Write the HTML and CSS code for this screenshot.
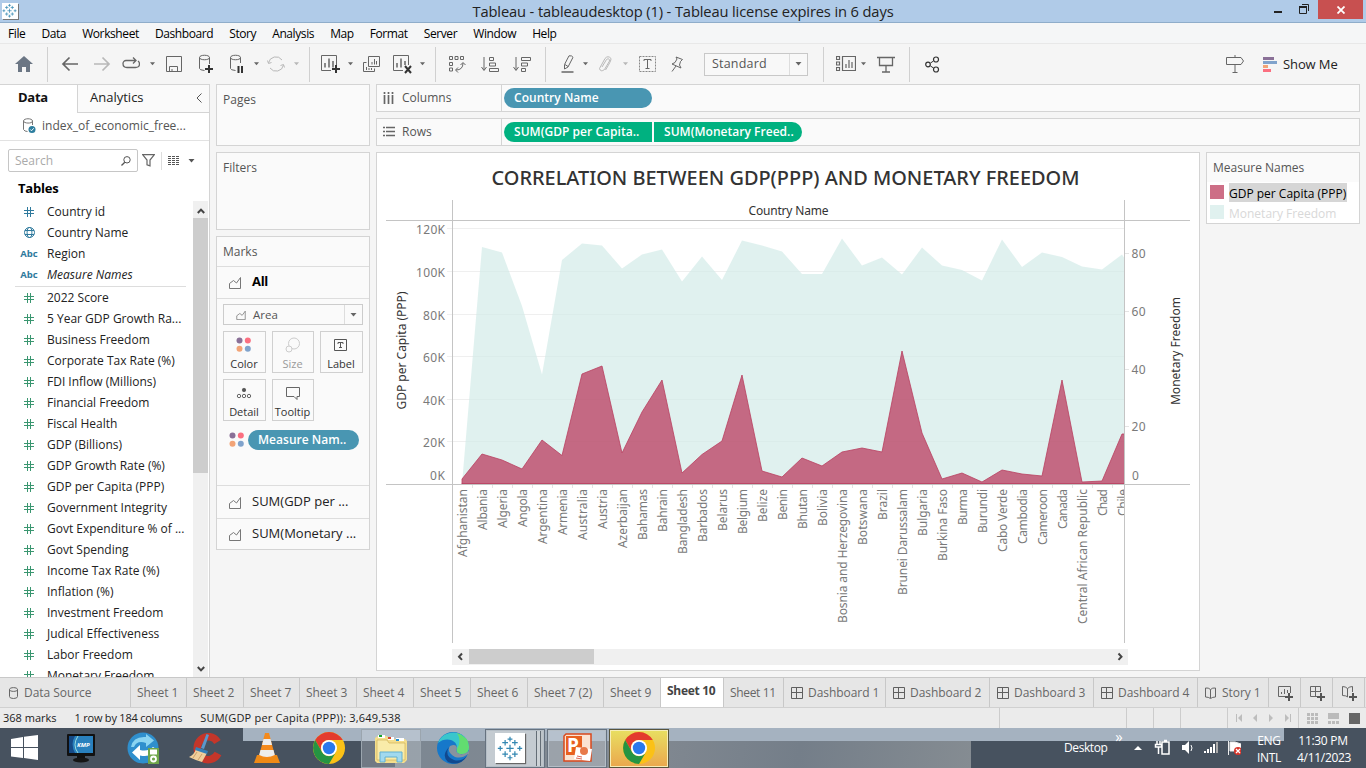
FILE: index.html
```html
<!DOCTYPE html>
<html lang="en">
<head>
<meta charset="utf-8">
<title>Tableau - tableaudesktop (1)</title>
<link rel="stylesheet" href="styles.css">
</head>
<body>
<svg class="defs" width="0" height="0">
  <symbol id="caret" viewBox="0 0 6 4"><path d="M0 0h6L3 3.6z" fill="currentColor"/></symbol>
  <symbol id="hash" viewBox="0 0 10 10"><path d="M3.5 0v10M6.5 0v10M0 3.5h10M0 6.5h10" stroke="currentColor" fill="none"/></symbol>
  <symbol id="area" viewBox="0 0 14 13"><path d="M1.500 12.500v-5l4-3 3 2.500 4-5.500v11z" fill="none" stroke="#777"/></symbol>
  <symbol id="dots" viewBox="0 0 16 16"><circle cx="3.500" cy="3.500" r="3" fill="#8a7097"/><circle cx="11.800" cy="3.500" r="3" fill="#fb6f80"/><circle cx="3.500" cy="11.700" r="3" fill="#f2a477"/><circle cx="11.800" cy="11.700" r="3" fill="#80a3cc"/></symbol>
  <symbol id="grid" viewBox="0 0 12 12"><path d="M.5.5h11v11H.5zM5.500 0v12M0 5.500h12" fill="none" stroke="#5f5f5f"/></symbol>
  <symbol id="book" viewBox="0 0 12 12"><path d="M5.500 2.500v8.500M5.500 2.500Q3.500.5.500 1v9q3 0 5 1.500 2-1.500 5-1.500V1q-3-.500-5 1.500" fill="none" stroke="#666"/></symbol>
  <symbol id="logo" viewBox="0 0 32 32"><g stroke="#3287b2" stroke-width="1.500" fill="none"><path d="M16 12v9M11.500 16.500h9M16 2v6M13 5h6M16 25v6M13 28h6M4 13.500v6M1 16.500h6M28 13.500v6M25 16.500h6M10 6v7M6.500 9.500h7M22 6v7M18.500 9.500h7M10 20v7M6.500 23.500h7M22 20v7M18.500 23.500h7"/></g></symbol>
  <symbol id="chrome" viewBox="0 0 32 32"><circle cx="16" cy="16" r="16" fill="#fbc116"/><path d="M2.200 8a16 16 0 0 1 27.600 0H16a8 8 0 0 0-7 12z" fill="#e33b2e"/><path d="M2.200 8a16 16 0 0 0 13.800 24l7-12a8 8 0 0 1-14 0z" fill="#259442"/><circle cx="16" cy="16" r="8" fill="#fff"/><circle cx="16" cy="16" r="6.200" fill="#2b79ec"/></symbol>
</svg>

<header class="titlebar">
  <span class="app-icon"><svg width="15" height="15"><use href="#logo"/></svg></span>
  <span class="title">Tableau - tableaudesktop (1) - Tableau license expires in 6 days</span>
  <span class="win-controls">
    <svg width="48" height="19" viewBox="1270 0 48 19"><path d="M1274 12h8" stroke="#222" stroke-width="2"/><path d="M1299.500 6.500h7v7h-7zM1302 4.500h6.500V11" fill="none" stroke="#222"/><path d="M1299 7h8" stroke="#222" stroke-width="2"/></svg>
    <span class="close"><svg width="8" height="8" viewBox="0 0 8 8"><path d="M.5.5l7 7M7.500.5l-7 7" stroke="#fff" stroke-width="1.800"/></svg></span>
  </span>
</header>

<nav class="menubar"><span>File</span><span>Data</span><span>Worksheet</span><span>Dashboard</span><span>Story</span><span>Analysis</span><span>Map</span><span>Format</span><span>Server</span><span>Window</span><span>Help</span></nav>

<div class="toolbar">
  <svg width="18" height="18" viewBox="0 0 18 18"><path d="M9 1l9 8h-3v8h-4v-5H7v5H3V9H0z" fill="#6b7684" stroke="none"/></svg>
  <i class="sep"></i>
  <svg width="18" height="16" viewBox="0 0 18 16"><path d="M17 8H2M8.500 1.500L2 8l6.500 6.500" stroke-width="1.700"/></svg>
  <svg class="off" width="18" height="16" viewBox="0 0 18 16"><path d="M1 8h15M9.500 1.500L16 8l-6.500 6.500" stroke-width="1.700"/></svg>
  <svg width="18" height="14" viewBox="0 0 18 14"><path d="M14 3.500H4a3 3 0 0 0-3 3q0 4 4 4h8.500q4 0 4-3.500 0-2-1.500-3M11 .5l3 3-3 3" stroke-width="1.300"/></svg>
  <svg class="car" width="5" height="4"><use href="#caret"/></svg>
  <svg width="16" height="16" viewBox="0 0 16 16"><path d="M.5.5h15v15H.5zM3.500 15v-4.500h8V15M6 15v-2"/></svg>
  <svg width="16" height="20" viewBox="0 0 16 20"><path d="M1.500 3.500v11q0 1.500 5 2M11.500 3.500V10M1.500 3.500c0-3 10-3 10 0s-10 3-10 0"/><path d="M11 11v8M7 15h8" stroke="#333" stroke-width="2"/></svg>
  <svg width="16" height="20" viewBox="0 0 16 20"><path d="M1.500 3.500v11q0 1.500 5 2M11.500 3.500V9M1.500 3.500c0-3 10-3 10 0s-10 3-10 0"/><path d="M9.500 12v7M13 12v7" stroke="#333" stroke-width="2"/></svg>
  <svg class="car" width="5" height="4"><use href="#caret"/></svg>
  <svg class="off" width="18" height="18" viewBox="0 0 18 18"><path d="M1.500 8a7.500 7.500 0 0 1 13.500-3M16.500 10A7.500 7.500 0 0 1 3 13M.5 5.500l1 3 3-1M17.500 12.500l-1-3-3 1"/></svg>
  <svg class="car off" width="5" height="4"><use href="#caret"/></svg>
  <i class="sep"></i>
  <svg width="20" height="19" viewBox="0 0 20 19"><path d="M10 15.500H.5V.5h15V10"/><path d="M4 12.500V8M8 12.500v-9M12 12.500V6" stroke-width="1.500"/><path d="M15 10v8M11 14h8" stroke="#333" stroke-width="2"/></svg>
  <svg class="car" width="5" height="4"><use href="#caret"/></svg>
  <svg width="17" height="17" viewBox="0 0 17 17"><path d="M5.500.5h11v10h-11zM3.500 6.500h-3v9h11v-3M9 8.500V6M11.500 8.500V3M13.500 8.500V5M3.500 14v-3M6 14v-2M8.500 14v-2"/></svg>
  <svg width="19" height="19" viewBox="0 0 19 19"><path d="M10 15.500H.5V.5h15V10"/><path d="M4 12.500V8M8 12.500v-9M12 10V6" stroke-width="1.500"/><path d="M12 11l6 7M18 11l-6 7" stroke="#333" stroke-width="2"/></svg>
  <svg class="car" width="5" height="4"><use href="#caret"/></svg>
  <i class="sep"></i>
  <svg width="17" height="17" viewBox="0 0 17 17"><path d="M.5.5h3v3h-3zM6 .5h3v3H6zM11.500.5h3v3h-3zM.5 6.500h3v3h-3zM.5 12h3v3h-3zM7 14q7 0 7-7M9 11.500L6.500 14 9 16.500M11.500 9L14 6.500 16.500 9"/></svg>
  <svg width="19" height="17" viewBox="0 0 19 17"><path d="M3 1v13M.5 11L3 14.500 5.500 11M8.500 1.500h4v3h-4zM8.500 7h6v3h-6zM8.500 12.500h9v3h-9z"/></svg>
  <svg width="19" height="17" viewBox="0 0 19 17"><path d="M3 1v13M.5 11L3 14.500 5.500 11M8.500 1.500h9v3h-9zM8.500 7h6v3h-6zM8.500 12.500h4v3h-4z"/></svg>
  <i class="sep"></i>
  <svg width="14" height="18" viewBox="0 0 14 18"><path d="M8 .8q3-.5 4 1.500L7 12l-3.500 2v-4.500zM4 9.500l3 2"/><path d="M.5 17h12" stroke-width="1.500"/></svg>
  <svg class="car" width="5" height="4"><use href="#caret"/></svg>
  <svg class="off" width="14" height="17" viewBox="0 0 14 17"><path d="M4 11L8.500 3.500q3-2 3 1.500L6.500 13.500q-4 3-5-1L7 2.500q3-3.500 6 0 .5 2-5.500 11.500"/></svg>
  <svg class="car off" width="5" height="4"><use href="#caret"/></svg>
  <svg width="17" height="16" viewBox="0 0 17 16"><path d="M.5.5h16v15H.5z" stroke-dasharray="2 1" stroke="#888"/><path d="M5 5V3.500h7V5M8.500 4v8.500M6.500 12.500h4"/></svg>
  <svg width="14" height="16" viewBox="0 0 14 16"><path d="M6 1l6.500 2.500L10.500 5.500 9.500 9l1.500 3L2 8l3-1.500 2-3.500zM6 10l-4 5.500"/></svg>
  <div class="combo"><span>Standard</span><b><svg width="7" height="4"><use href="#caret"/></svg></b></div>
  <i class="sep"></i>
  <svg width="20" height="16" viewBox="0 0 20 16"><path d="M.5.5h3v3h-3zM.5 6h3v3h-3zM.5 11.500h3v3h-3zM6.500.5h13v14h-13zM10 12V8M13 12V4M16 12V6" stroke-width="1.200"/></svg>
  <svg class="car" width="5" height="4"><use href="#caret"/></svg>
  <svg width="18" height="17" viewBox="0 0 18 17"><path d="M0 1.500h18M2.500 1.500v8h13v-8M9 9.500V16M5 16h8" stroke-width="1.300"/></svg>
  <i class="sep"></i>
  <svg width="15" height="17" viewBox="0 0 15 17"><path d="M5.500 7l3-2M5.500 10l3 2" stroke="#333"/><g stroke="#333" stroke-width="1.200"><circle cx="3" cy="8.500" r="2.300"/><circle cx="11" cy="3.500" r="2.500"/><circle cx="11" cy="13.500" r="2.500"/></g></svg>
  <i></i>
  <svg width="18" height="18" viewBox="0 0 18 18"><path d="M.5 2.500H15l2.500 3.500L15 9.500H.5zM9 0v2M9 9.500v8M6.500 17.500h5"/></svg>
  <div class="showme"><svg width="14" height="15" viewBox="0 0 14 15"><g stroke="none"><path d="M0 0h11v3H0z" fill="#8a7097"/><path d="M0 4h14v3H0z" fill="#80a3cc"/><path d="M0 8h5v3H0z" fill="#f2a477"/><path d="M0 12h8v3H0z" fill="#fb6f80"/></g></svg>Show Me</div>
</div>

<main class="workspace">
  <aside class="data-pane">
    <div class="pane-tabs"><span class="active">Data</span><span class="analytics">Analytics<svg width="6" height="10" viewBox="0 0 6 10"><path d="M5.500.5L1 5l4.500 4.500" fill="none" stroke="#555"/></svg></span></div>
    <div class="source"><svg width="15" height="16" viewBox="0 0 15 16"><path d="M1.500 3v8.500q1 2 4 2M10.500 3v4M1.500 3c0-3 9-3 9 0s-9 2.500-9 0" fill="none" stroke="#777"/><circle cx="10" cy="11.500" r="3.500" fill="#2d7e9f"/><path d="M8.300 11.500l1.200 1.300 2.200-2.500" fill="none" stroke="#fff"/></svg><span>index_of_economic_free...</span></div>
    <div class="search-row">
      <div class="search"><span>Search</span><svg width="10" height="10" viewBox="0 0 10 10"><circle cx="6" cy="3.800" r="3.200" fill="none" stroke="#555"/><path d="M3.800 6.200L.5 9.500" stroke="#555" stroke-width="1.300"/></svg></div>
      <svg class="funnel" width="13" height="13" viewBox="0 0 13 13"><path d="M.6.6h11.800L8 6v5.800l-3-1V6z" fill="none" stroke="#666" stroke-width="1.200"/></svg>
      <svg class="view" width="12" height="10" viewBox="0 0 12 10"><path d="M0 .5h12M0 2.500h12M0 4.500h12M0 6.500h12M0 8.500h12" stroke="#555" stroke-dasharray="3 1"/></svg>
      <svg class="car" width="7" height="4"><use href="#caret"/></svg>
    </div>
    <h2>Tables</h2>
    <div class="fields">
      <div class="list" id="fields"></div>
      <div class="vscroll"><svg width="8" height="6" viewBox="0 0 8 6"><path d="M.8 5L4 1.600 7.200 5" fill="none" stroke="#444" stroke-width="2"/></svg><b></b><svg width="8" height="6" viewBox="0 0 8 6"><path d="M.8 1L4 4.400 7.200 1" fill="none" stroke="#444" stroke-width="2"/></svg></div>
    </div>
  </aside>

  <section class="cards">
    <div class="card pages">Pages</div>
    <div class="card filters">Filters</div>
    <div class="card marks">
      <div class="marks-title">Marks</div>
      <div class="mark-row all"><svg width="14" height="13"><use href="#area"/></svg><span>All</span></div>
      <div class="marks-body">
        <div class="mark-type"><svg width="12" height="10"><use href="#area"/></svg><span>Area</span><b><svg width="7" height="4"><use href="#caret"/></svg></b></div>
        <div class="mark-buttons">
          <div><svg width="16" height="16"><use href="#dots"/></svg>Color</div>
          <div class="dim"><svg width="16" height="16" viewBox="0 0 16 16" fill="none" stroke="#ccc"><circle cx="9" cy="6.500" r="5.500"/><circle cx="4" cy="12" r="3" fill="#fafafa"/></svg>Size</div>
          <div><svg width="16" height="16" viewBox="0 0 16 16" fill="none" stroke="#555"><path d="M1.500 2.500h12v11h-12zM5 7V5.500h5V7M7.500 5.500v5M6 10.500h3"/></svg>Label</div>
          <div><svg width="16" height="16" viewBox="0 0 16 16" fill="none" stroke="#666"><circle cx="8" cy="5" r="1.700" fill="#555"/><circle cx="3" cy="11" r="1.700"/><circle cx="8" cy="11" r="1.700"/><circle cx="13" cy="11" r="1.700"/></svg>Detail</div>
          <div><svg width="16" height="16" viewBox="0 0 16 16" fill="none" stroke="#666"><path d="M1.500 2.500h13v9H12v3l-3-3H1.500z"/></svg>Tooltip</div>
        </div>
        <div class="encoding"><svg width="16" height="16"><use href="#dots"/></svg><span class="pill blue">Measure Nam..</span></div>
      </div>
      <div class="mark-row"><svg width="14" height="13"><use href="#area"/></svg><span>SUM(GDP per ...</span></div>
      <div class="mark-row"><svg width="14" height="13"><use href="#area"/></svg><span>SUM(Monetary ...</span></div>
    </div>
  </section>

  <section class="sheet">
    <div class="shelf"><div class="shelf-name"><svg width="12" height="12" viewBox="0 0 12 12"><path d="M1.500 3v9M5.500 3v9M9.500 3v9M1.500 0v2M5.500 0v2M9.500 0v2" stroke="#666" stroke-width="1.700"/></svg>Columns</div><span class="pill blue">Country Name</span></div>
    <div class="shelf"><div class="shelf-name"><svg width="12" height="12" viewBox="0 0 12 12"><path d="M3 1.500h9M3 5.500h9M3 9.500h9M0 1.500h2M0 5.500h2M0 9.500h2" stroke="#666" stroke-width="1.700"/></svg>Rows</div><span class="pill green first">SUM(GDP per Capita..</span><span class="pill green last">SUM(Monetary Freed..</span></div>
    <div class="canvas-row">
      <div class="view-card"><svg id="chart" width="822" height="517" viewBox="377 153 822 517"></svg></div>
      <div class="legend"><h3>Measure Names</h3>
        <div class="key"><i class="rose"></i><span class="selected">GDP per Capita (PPP)</span></div>
        <div class="key faded"><i class="mint"></i><span>Monetary Freedom</span></div>
      </div>
    </div>
  </section>
</main>

<nav class="sheet-tabs">
  <span class="ds"><svg width="9" height="12" viewBox="0 0 9 12"><path d="M.5 2.500v7q0 2 4 2t4-2v-7c0-2.500-8-2.500-8 0s8 2.500 8 0" fill="none" stroke="#666"/></svg>Data Source</span>
  <span>Sheet 1</span><span>Sheet 2</span><span>Sheet 7</span><span>Sheet 3</span><span>Sheet 4</span><span>Sheet 5</span><span>Sheet 6</span><span>Sheet 7 (2)</span><span>Sheet 9</span><span class="active">Sheet 10</span><span class="tight">Sheet 11</span>
  <span class="dash"><svg width="12" height="12"><use href="#grid"/></svg>Dashboard 1</span><span class="dash"><svg width="12" height="12"><use href="#grid"/></svg>Dashboard 2</span><span class="dash"><svg width="12" height="12"><use href="#grid"/></svg>Dashboard 3</span><span class="dash"><svg width="12" height="12"><use href="#grid"/></svg>Dashboard 4</span>
  <span class="dash"><svg width="12" height="12"><use href="#book"/></svg>Story 1</span>
  <span class="new"><svg width="15" height="15" viewBox="0 0 15 15"><path d="M8 10.500H.5V.5h12V7M3.500 8V6M6.500 8V3M9.500 7V4" fill="none" stroke="#666"/><path d="M11 7v8M7 11h8" stroke="#555" stroke-width="2"/></svg></span>
  <span class="new"><svg width="15" height="15" viewBox="0 0 15 15"><path d="M7 10.500H.5V.5h10V6M5.500 0v10M0 5.500h11" fill="none" stroke="#666"/><path d="M11 7v8M7 11h8" stroke="#555" stroke-width="2"/></svg></span>
  <span class="new"><svg width="15" height="15" viewBox="0 0 15 15"><path d="M6 11Q4 9.500.5 9.500v-9q3 0 5 2 2-2 5-2V6M5.500 2.500V11" fill="none" stroke="#666"/><path d="M11 7v8M7 11h8" stroke="#555" stroke-width="2"/></svg></span>
  <span></span>
</nav>

<footer class="status">
  <div class="stats"><span>368 marks</span><span>1 row by 184 columns</span><span>SUM(GDP per Capita (PPP)): 3,649,538</span></div>
  <i></i><i></i><i></i><i></i>
  <div><svg width="56" height="8" viewBox="0 0 56 8" fill="#bdbdbd"><path d="M0 0h1v8H0zM6 0v8L2 4zM21 0v8l-4-4zM33 0v8l4-4zM49 0v8l4-4zM54 0h1v8h-1z"/></svg></div>
  <div><svg width="54" height="11" viewBox="0 0 54 11"><path d="M0 1.500h11M0 5.500h11M0 9.500h11" stroke="#bbb" stroke-width="3" stroke-dasharray="3 1"/><path d="M21 0h11v6H21zM21 8h3v3h-3zM25 8h3v3h-3zM29 8h3v3h-3z" fill="#bbb"/><path d="M42 0h11v11H42z" fill="#666"/></svg></div>
</footer>

<footer class="taskbar">
  <div class="start"><svg width="28" height="26" viewBox="0 0 28 26"><path d="M0 4l12-2v10H0zM13 1.800L27 0v12H13zM0 13h12v10L0 21.500zM13 13h14v12l-14-2z" fill="#fff"/></svg></div>
  <div><svg width="30" height="30" viewBox="0 0 30 30"><rect x="1" y="1" width="28" height="22" rx="1" fill="#111"/><rect x="3" y="3" width="24" height="17" fill="#2980bd"/><path d="M3 3h6q-5 8 0 17H3z" fill="#164a86"/><path d="M12 3q-6 9 0 17" stroke="#9dd" fill="none"/><text x="11" y="14" class="kmp">KMP</text><path d="M11 23h8v3h-8z" fill="#111"/><ellipse cx="15" cy="27" rx="8" ry="2.500" fill="#151515"/></svg></div>
  <div><svg width="34" height="32" viewBox="0 0 34 32"><circle cx="17" cy="16" r="15.500" fill="#2f8fcd"/><path d="M5 15Q7 4 20 5V2l8 6.500-8 6.500v-4Q11 8 8 15z" fill="#8bd4f1"/><path d="M30 17Q26 26 14 23.500V28L6 20.500l8-7.500v5q8 2 13-3z" fill="#fff"/><rect x="22" y="16" width="11" height="16" fill="#6fa64b"/><path d="M24 17.500h7v5h-7z" fill="#fff"/><circle cx="27.500" cy="27" r="2.500" fill="none" stroke="#fff" stroke-width="1.800"/></svg></div>
  <div><svg width="34" height="32" viewBox="0 0 34 32"><path d="M29.500 10A11 11.500 0 1 0 30 21.500" fill="none" stroke="#c4362a" stroke-width="7.500"/><path d="M18.500 2l2.500 1-5 14-3-1z" fill="#5b97cb"/><path d="M8 17l11 4-5 9Q7 28 1 25q5-2 7-8z" fill="#efcf9c"/><path d="M8 15l12 4-1 3-12-4z" fill="#3580b8"/><path d="M9 20l-4 6M14 22l-4 6" stroke="#cfa068" fill="none"/></svg></div>
  <div><svg width="28" height="32" viewBox="0 0 28 32"><path d="M4 23h20l3 8H1z" fill="#ef8a16"/><path d="M12 1h4l6 23q-8 5-16 0z" fill="#f58a1c"/><path d="M10.500 7h7l1.500 6H9zM7.500 18h13l1.300 5q-8 4-15.600 0z" fill="#eee"/></svg></div>
  <div><svg width="32" height="32"><use href="#chrome"/></svg></div>
  <div class="task wide"><svg width="34" height="32" viewBox="0 0 34 32"><path d="M1 6l3-2h9l2 3h16l2 2v19l-3 3H3L1 29z" fill="#f4de8c"/><path d="M3 8h10l2 3h16v17H3z" fill="#f9eba9" stroke="#caa94e" stroke-width=".6"/><path d="M4 3h7v3H4zM14 5h6v3h-6zM22 6h8v3h-8z" fill="#fff"/><path d="M5 3h3v2H5z" fill="#17a52d"/><path d="M14 5h3v2h-3z" fill="#d9492c"/><path d="M22 7h3v2h-3z" fill="#238ed6"/><path d="M6 30V20h22v10h-5v-5H11v5z" fill="#a1d9ef" stroke="#62b0d1"/></svg></div>
  <div><svg width="32" height="32" viewBox="0 0 32 32"><circle cx="16" cy="16" r="16" fill="#1678ca"/><path d="M1 11C7-5 31-2 32 15q0 8-9 7-5-1-3-6c0-9-12-11-19-5z" fill="#39c6cc"/><path d="M20 1q12 4 12 14 0 8-9 7-4-1-3-5 5-8 0-16z" fill="#62dd70"/><path d="M12 15Q7 24 17 28q7 2 13-4-7 11-19 6Q4 24 12 15z" fill="#11498f"/><path d="M13 14q-4 6 5 11 7 2 13-3 2 0 1-3-4 4-9 3-5-1-3-6-1-5-7-2z" fill="#87939f"/></svg></div>
  <div class="task stack"><span class="tableau"><svg width="26" height="28"><use href="#logo"/></svg></span></div>
  <div class="task"><svg width="31" height="32" viewBox="0 0 31 32"><path d="M4 2h25v27H2V4z" fill="#fbe3d2" stroke="#d9481c" stroke-width="1.500"/><path d="M4 4h16v19H4z" fill="#e8601f"/><text x="5" y="20" class="ppt">P</text><path d="M14 15l16 2-2 12-16-2z" fill="#fff"/><circle cx="22" cy="19" r="4" fill="#e87a4a"/><path d="M15 24l5 1M14 26l6 1" stroke="#d65"/></svg></div>
  <div class="task hot"><svg width="32" height="32"><use href="#chrome"/></svg></div>
  <div class="tray">
    <span class="desk">Desktop</span><span class="more">»</span>
    <svg width="110" height="18" viewBox="1132 740 110 18"><path d="M1135 751l4-4 4 4z" fill="#fff"/><g fill="none" stroke="#fff" stroke-width="1.500"><path d="M1163 743h7v12h-7zM1165 741.500h3M1158 742v4M1161 742v4M1156.500 745.500h6v2.500h-6zM1159.500 748v7"/></g><path d="M1183 746h3l4-4v13l-4-4h-3z" fill="#fff"/><path d="M1192 746q2 3 0 6" stroke="#fff" fill="none"/><path d="M1205 754v-2h2v2zM1208 754v-4h2v4zM1211 754v-6h2v6zM1214 754v-9h2v9z" fill="#fff"/><path d="M1217 754v-11h2v11z" fill="#aaa"/><path d="M1229.500 742v14M1231 743h5l6 2v7h-11z" fill="#fff" stroke="#eee"/><circle cx="1239" cy="752" r="4" fill="#d8352a"/><path d="M1237 750l4 4M1241 750l-4 4" stroke="#fff" stroke-width="1.300"/></svg>
    <span class="lang">ENG<br>INTL</span><span class="clock">11:30 PM<br>4/11/2023</span>
  </div>
</footer>
<script src="app.js"></script>
</body>
</html>
```
FILE: styles.css
```css
* { box-sizing: border-box; }
body { margin: 0; width: 1366px; height: 768px; overflow: hidden; display: flex; flex-direction: column; background: #f5f5f5; color: #222; font: 12px/16px "Open Sans", "Noto Sans", sans-serif; white-space: nowrap; }
.defs { position: absolute; }
svg { display: block; flex: none; }

.titlebar { height: 23px; flex: none; display: grid; grid-template-columns: 1fr auto 1fr; background: #b0cbe8; border-bottom: 1px solid #8fadca; }
.app-icon { width: 16px; height: 16px; margin: 3px 0 0 2px; background: #fff; box-shadow: 1px 1px 0 #777; }
.title { font-size: 14.700px; letter-spacing: -.13px; line-height: 23px; color: #222; }
.win-controls { justify-self: end; display: flex; padding-right: 3px; }
.close { width: 45px; height: 19px; background: #c85050; display: grid; place-items: center; }

.menubar { height: 21px; flex: none; display: flex; gap: 16px; padding-left: 8px; line-height: 21px; font-size: 12px; letter-spacing: -0.400px; color: #000; background: #f5f6f7; border-bottom: 1px solid #e8e8e8; }

.toolbar { height: 40px; flex: none; display: grid; align-items: center; justify-items: center; grid-template-columns: 47px 1px 44px 20px 38px 5px 38px 26px 35px 5px 34px 6px 21px 21px 19px 23px 38px 2px 25px 18px 48px 16px 31px 14px 21px 18px 23px 21px 38px 120px 15px 29px 7px 37px 11px 34px 272px 28px 1fr; color: #666; }
.toolbar svg { fill: none; stroke: #666; }
.toolbar .off { stroke: #b8b8b8; color: #b8b8b8; }
.toolbar .car { stroke: none; }
.sep { width: 1px; height: 35px; background: #d0d0d0; }
.combo { width: 104px; height: 23px; border: 1px solid #c8c8c8; background: #f8f8f8; display: flex; align-items: center; justify-content: space-between; padding-left: 7px; font-size: 12.500px; color: #555; letter-spacing: .2px; }
.combo b, .mark-type b { width: 18px; align-self: stretch; border-left: 1px solid #ddd; display: grid; place-items: center; color: #666; }
.combo svg, .mark-type b svg { stroke: none; }
.showme { justify-self: start; display: flex; align-items: center; gap: 6px; margin-left: 14px; font-size: 13px; letter-spacing: -.1px; color: #222; }

.workspace { height: 593px; flex: none; display: grid; grid-template-columns: 210px 154px 984px; column-gap: 6px; }
.data-pane { display: flex; flex-direction: column; min-height: 0; background: #fff; border-right: 1px solid #d4d4d4; border-top: 1px solid #d4d4d4; }
.pane-tabs { height: 26px; flex: none; display: grid; grid-template-columns: 77px 1fr; font-size: 13px; line-height: 25px; }
.pane-tabs .active { padding-left: 18px; font-weight: 700; letter-spacing: -.3px; color: #111; }
.analytics { display: flex; justify-content: space-between; align-items: center; padding: 0 7px 2px 12px; background: #fafafa; border: solid #d4d4d4; border-width: 0 0 1px 1px; }
.source { height: 30px; flex: none; display: flex; align-items: center; gap: 5px; padding-left: 22px; color: #555; border-bottom: 1px solid #e2e2e2; }
.search-row { height: 37px; flex: none; display: flex; align-items: center; padding: 2px 0 0 8px; color: #555; }
.search { width: 130px; height: 23px; border: 1px solid #c6c6c6; border-radius: 2px; display: flex; align-items: center; justify-content: space-between; padding: 0 6px; color: #aaa; }
.funnel { margin-left: 4px; }
.view { margin: 0 8px 0 6px; box-sizing: content-box; border-left: 1px solid #ddd; padding: 4px 0 4px 6px; }
.data-pane h2 { margin: 0; height: 23px; flex: none; padding-left: 18px; font-size: 13px; line-height: 21px; letter-spacing: -.2px; color: #000; }
.fields { flex: 1; min-height: 0; display: flex; justify-content: space-between; }
.list { overflow: hidden; flex: 1; }
.field { height: 21px; display: grid; grid-template-columns: 32px 1fr; align-items: center; padding-left: 15px; color: #3a9670; line-height: 21px; }
.field span { color: #222; }
.field .ico { justify-self: center; margin-right: 4px; }
.field.dim { color: #2f7a9d; }
.field .abc { font-size: 9.500px; font-weight: 700; color: #2f7a9d; margin-right: 4px; }
.field.italic span:last-child { font-style: italic; }
.field.rule { height: 23px; margin-left: 15px; padding: 0; margin-right: 7px; border-top: 1px solid #ddd; margin-top: 1px; height: 22px; }
.vscroll { width: 15px; margin-right: 1px; background: #f0f0f0; display: grid; grid-template-rows: 17px 255px 1fr; justify-items: center; }
.vscroll svg:first-child { margin-top: 7px; }
.vscroll svg:last-child { align-self: end; margin-bottom: 5px; }
.vscroll b { width: 15px; background: #cdcdcd; }

.cards { display: flex; flex-direction: column; gap: 6px; color: #555; }
.card { border: 1px solid #d4d4d4; background: #fafafa; padding: 7px 6px; }
.pages { height: 62px; }
.filters { height: 78px; }
.marks { height: 314px; padding: 0; }
.marks-title { height: 30px; padding: 7px 6px; border-bottom: 1px solid #ddd; }
.mark-row { height: 32px; display: flex; align-items: center; gap: 10px; padding-left: 11px; font-size: 13px; color: #222; }
.mark-row span { padding-bottom: 3px; }
.mark-row + .mark-row { border-top: 1px solid #ddd; }
.mark-row.all { font-weight: 700; border-bottom: 1px solid #ddd; color: #000; letter-spacing: -.3px; }
.marks-body { height: 187px; border-bottom: 1px solid #ddd; padding: 5px 6px; }
.mark-type { height: 21px; width: 140px; border: 1px solid #ccc; display: flex; align-items: center; padding-left: 11px; gap: 6px; font-size: 11.500px; }
.mark-type b { margin-left: auto; }
.mark-buttons { display: grid; grid-template-columns: 43px 42px 43px; gap: 6px; margin-top: 6px; }
.mark-buttons div { height: 42px; border: 1px solid #d0d0d0; display: flex; flex-direction: column; align-items: center; padding: 5px 1px 0 0; gap: 3px; font-size: 11px; color: #333; }
.mark-buttons .dim { color: #999; }
.encoding { display: flex; align-items: center; gap: 3px; margin: 9px 0 0 6px; }
.pill { height: 20px; border-radius: 10px; padding-left: 10px; font-size: 12px; line-height: 19px; color: #fff; font-weight: 600; letter-spacing: .03px; }
.blue { background: #4996b2; }
.green { background: #00b180; }
.encoding .pill { width: 111px; }

.sheet { display: flex; flex-direction: column; gap: 6px; }
.shelf { height: 28px; border: 1px solid #d4d4d4; background: #fafafa; display: flex; align-items: center; gap: 2px; }
.shelf-name { width: 125px; height: 26px; display: flex; align-items: center; gap: 7px; padding-left: 6px; border-right: 1px solid #d4d4d4; color: #555; }
.shelf .pill { width: 148px; }
.shelf .first { border-radius: 10px 0 0 10px; }
.shelf .last { border-radius: 0 10px 10px 0; }
.canvas-row { display: grid; grid-template-columns: 824px 154px; gap: 6px; align-items: start; }
.view-card { height: 519px; background: #fff; border: 1px solid #d4d4d4; }
.legend { height: 72px; background: #fff; border: 1px solid #d4d4d4; }
.legend h3 { margin: 0; height: 29px; padding: 7px 6px; background: #fafafa; font-size: 12px; font-weight: 400; color: #555; }
.key { height: 20px; display: flex; align-items: center; gap: 5px; padding-left: 3px; color: #000; }
.key i { width: 14px; height: 14px; }
.key span { line-height: 17px; padding: 2px 1px 0 0; }
.key .selected { background: #d6d6d6; }
.key.faded { color: #d8d8d8; }
.rose { background: #cd6e86; }
.mint { background: #e0f1ef; }

.chart-label { font-family: "Noto Sans", "Open Sans", sans-serif; font-size: 12px; fill: #7a7a7a; }
.chart-dark { fill: #333; }
.chart-title { font: 500 19.800px "Noto Sans", "Open Sans", sans-serif; fill: #333; }

.sheet-tabs { height: 31px; flex: none; display: grid; grid-template-columns: 131px 56px 57px 56px 57px 57px 57px 57px 76px 57px 63px 60px 102px 104px 104px 104px 71px 32px 32px 32px 1fr; background: #e6e6e6; border-top: 1px solid #c8c8c8; border-bottom: 1px solid #d0d0d0; color: #666; }
.sheet-tabs span { display: flex; align-items: center; border-right: 1px solid #c8c8c8; padding-left: 6px; letter-spacing: -.05px; }
.sheet-tabs .ds { padding-left: 9px; gap: 6px; }
.sheet-tabs .dash { padding-left: 7px; gap: 5px; }
.sheet-tabs .new { padding: 2px 0 0 9px; }
.sheet-tabs .active { background: #fff; color: #444; font-weight: 700; padding-bottom: 3px; letter-spacing: -.3px; }
.sheet-tabs .tight { letter-spacing: -.35px; }

.status { height: 20px; flex: none; display: grid; grid-template-columns: 1000px 127px 27px 27px 47px 71px 67px; align-items: stretch; background: #ebebeb; font-size: 11px; color: #222; }
.status > * { border-right: 1px solid #ccc; display: flex; align-items: center; padding-left: 8px; }
.status > :last-child { border: 0; }
.status .stats { gap: 18px; padding-left: 3px; }
.stats span:nth-child(2) { letter-spacing: -.22px; }
.stats span:last-child { letter-spacing: .2px; }

.taskbar { height: 40px; flex: none; display: grid; grid-template-columns: 50px repeat(10, 62px) 1fr; align-items: center; justify-items: center; color: #fff; background: linear-gradient(#a5b2c0, #a5b2c0) 243px 0 / 1041px 13px no-repeat, linear-gradient(100deg, #7c8792, #838a92 40%, #747e89 70%, #858c92) 395px 13px / 576px 27px no-repeat, #47525f; }
.task { width: 60px; height: 39px; display: grid; place-items: center; border: 1px solid #66727f; box-shadow: inset 0 0 0 1px #b5bec6; background: rgba(235, 240, 245, .25); }
.task.wide { border-color: #9ba5ae; box-shadow: none; }
.task.stack { background: linear-gradient(90deg, #c4cbd1 50px, #636d76 50px, #636d76 51px, #ccd2d6 51px, #ccd2d6 54px, #636d76 54px, #636d76 55px, #bdc4c9 55px); justify-items: start; padding-left: 9px; }
.task.hot { background: linear-gradient(#e8df61, #eba74d); border-color: #58543b; box-shadow: inset 0 0 0 1px #f7edb7; }
.tableau { width: 30px; height: 30px; background: #fff; display: grid; place-items: center; box-shadow: 1px 1px 1px #666; }
.kmp { font: italic 700 6px "Open Sans", sans-serif; fill: #fff; }
.ppt { font: 700 19px "Open Sans", sans-serif; fill: #fff; }
.tray { width: 100%; height: 40px; display: grid; grid-template-columns: 47px 16px 4px 110px 56px 52px; align-items: center; padding-left: 394px; line-height: 16px; }
.tray .desk { letter-spacing: -.4px; }
.tray .more { align-self: start; line-height: 17px; text-align: center; font-size: 15px; }
.tray svg { grid-column: 4; }
.lang, .clock { text-align: center; line-height: 17px; padding-top: 2px; letter-spacing: -.3px; }
```
FILE: app.js
```js
const dims = [["hash", "Country id"], ["globe", "Country Name"], ["abc", "Region"], ["abc", "Measure Names"]];
const measures = ["2022 Score", "5 Year GDP Growth Ra...", "Business Freedom", "Corporate Tax Rate (%)", "FDI Inflow (Millions)", "Financial Freedom", "Fiscal Health", "GDP (Billions)", "GDP Growth Rate (%)", "GDP per Capita (PPP)", "Government Integrity", "Govt Expenditure % of ...", "Govt Spending", "Income Tax Rate (%)", "Inflation (%)", "Investment Freedom", "Judical Effectiveness", "Labor Freedom", "Monetary Freedom"];
const icons = {
  hash: '<svg class="ico" width="10" height="10"><use href="#hash"/></svg>',
  globe: '<svg class="ico" width="11" height="11" viewBox="0 0 11 11" fill="none" stroke="currentColor"><circle cx="5.5" cy="5.5" r="5"/><ellipse cx="5.5" cy="5.5" rx="2.4" ry="5"/><path d="M1 3.500h9M1 7.500h9"/></svg>',
  abc: '<span class="abc ico">Abc</span>'
};
let rows = dims.map(([icon, name]) => `<div class="field dim${name === "Measure Names" ? " italic" : ""}">${icons[icon]}<span>${name}</span></div>`).join("");
rows += measures.map((name, i) => `<div class="field${i ? "" : " rule"}">${icons.hash}<span>${name}</span></div>`).join("");
document.getElementById("fields").innerHTML = rows;

/* name, rendered label length, GDP y, monetary freedom y */
const data = [
  ["Afghanistan", 68, 479, 484], ["Albania", 41, 454, 247], ["Algeria", 39, 460, 252.5], ["Angola", 38, 469, 306],
  ["Argentina", 55, 440, 374.5], ["Armenia", 46, 455.5, 260], ["Australia", 51, 374, 243.5], ["Austria", 40, 366, 245.5],
  ["Azerbaijan", 59, 453, 268.5], ["Bahamas", 51, 412, 254.5], ["Bahrain", 43, 380, 249.5], ["Bangladesh", 65, 473, 281.5],
  ["Barbados", 53, 454.5, 256.5], ["Belarus", 42, 441, 280], ["Belgium", 45, 375, 240.5], ["Belize", 33, 471, 245.5],
  ["Benin", 31, 477, 251.5], ["Bhutan", 40, 458, 274], ["Bolivia", 37, 466, 274], ["Bosnia and Herzegovina", 134, 452, 238.5],
  ["Botswana", 56, 448, 265.5], ["Brazil", 31, 452, 257.5], ["Brunei Darussalam", 106, 351, 274.5], ["Bulgaria", 47, 433, 247.5],
  ["Burkina Faso", 72, 479, 265.5], ["Burma", 36, 473, 270], ["Burundi", 44, 482, 280.5], ["Cabo Verde", 63, 470, 239.5],
  ["Cambodia", 55, 474, 267], ["Cameroon", 56, 476, 252.5], ["Canada", 40, 380, 257], ["Central African Republic", 135, 482, 266.5],
  ["Chad", 27, 481, 269.5], ["Chile", 27, 434, 254.5]
];
const xAt = i => 462 + 20 * i;
const line = k => data.map((d, i) => `L${xAt(i)} ${d[k]}`).join("");
const text = (x, y, t, len, extra = "", cls = "chart-label") => `<text class="${cls}" x="${x}" y="${y}" textLength="${len}" ${extra}>${t}</text>`;
const vtext = (x, y, t, len, cls) => text(x, y, t, len, `transform="rotate(-90 ${x} ${y})"`, cls);
let s = '<defs><clipPath id="plot"><path d="M453 200h671v443H453z"/></clipPath></defs>';
s += text(491.5, 185, "CORRELATION BETWEEN GDP(PPP) AND MONETARY FREEDOM", 588, 'lengthAdjust="spacingAndGlyphs"', "chart-title");
s += text(748.5, 215, "Country Name", 80, "", "chart-label chart-dark");
const grid = [[228.5, "120K", 416, 29], [271.5, "100K", 416, 29], [314.5, "80K", 423, 22], [356.5, "60K", 423, 22], [399.5, "40K", 423, 22], [441.5, "20K", 423, 22]];
grid.forEach(([y, t, x, len]) => { s += `<path d="M447 ${y}H1124" stroke="#efefef"/>` + text(x, y + 5, t, len); });
s += text(430, 480, "0K", 15);
s += `<g clip-path="url(#plot)"><path d="M462 484${line(3)}L1142 284V484z" fill="#cfe9e6" fill-opacity=".65"/>`;
s += `<path d="M462 484${line(2)}L1142 434V484z" fill="#b9375a" fill-opacity=".73"/><path d="M462 484${line(2)}L1142 434V483.500H462z" fill="none" stroke="#b94060" stroke-opacity=".8"/>`;
data.forEach((d, i) => { s += `<path d="M${xAt(i) + 10.5} 485v3" stroke="#e4e4e4"/>` + vtext(xAt(i) + 4.5, 489 + d[1], d[0], d[1]); });
s += "</g>";
s += '<path d="M386 220.500H1190M386 484.500H1190M452.500 200V643M1124.500 200V643" stroke="#c4c4c4"/>';
[[253.5, "80", 14], [311.5, "60", 14], [369.5, "40", 14], [426.5, "20", 14]].forEach(([y, t, len]) => { s += `<path d="M1125 ${y}h4" stroke="#e4e4e4"/>` + text(1131.5, y + 4.5, t, len); });
s += text(1132, 480, "0", 7);
s += vtext(406, 409.5, "GDP per Capita (PPP)", 118, "chart-label chart-dark");
s += vtext(1179.5, 405, "Monetary Freedom", 108, "chart-label chart-dark");
s += '<path d="M452 649h676v16H452z" fill="#f0f0f0"/><path d="M469 649h125v15H469z" fill="#cdcdcd"/><path d="M462 653.500l-3 3.200 3 3.200M1118.500 653.500l3 3.200-3 3.200" fill="none" stroke="#444" stroke-width="2"/>';
document.getElementById("chart").innerHTML = s;
```
